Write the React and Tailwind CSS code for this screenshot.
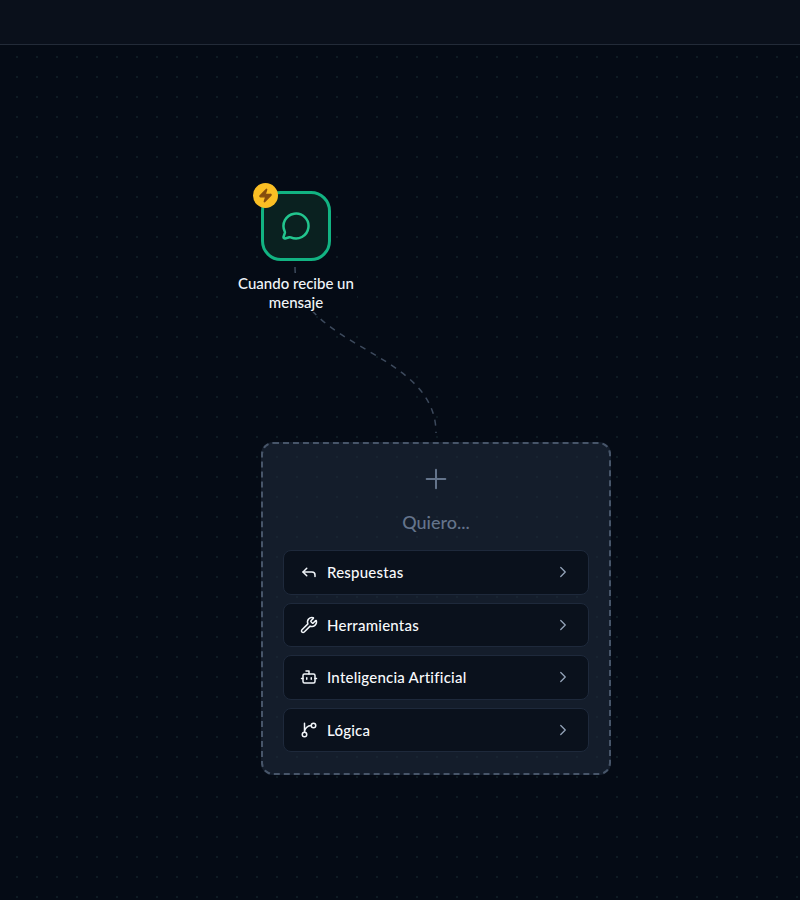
import React from "react";
import { Bot, ChevronRight, MessageCircle, Plus, Reply, Wrench, Zap } from "lucide-react";

const LogicIcon = ({ size, strokeWidth, className }) => (
  <svg
    width={size}
    height={size}
    viewBox="0 0 24 24"
    fill="none"
    stroke="currentColor"
    strokeWidth={strokeWidth}
    strokeLinecap="round"
    strokeLinejoin="round"
    className={className}
  >
    <path d="M15 6a9 9 0 0 0-9 9V3" />
    <circle cx="18" cy="6" r="3" />
    <circle cx="6" cy="18" r="3" />
  </svg>
);

const options = [
  { label: "Respuestas", icon: Reply },
  { label: "Herramientas", icon: Wrench },
  { label: "Inteligencia Artificial", icon: Bot },
  { label: "Lógica", icon: LogicIcon },
];

const App = () => {
  return (
    <div className="h-[900px] w-[800px] flex flex-col overflow-hidden bg-[#050b15] font-['Lato',sans-serif]">
      <header className="h-[45px] shrink-0 border-b border-[#232b38] bg-[#0a101b]" />

      {/* canvas */}
      <main className="relative flex-1 bg-[radial-gradient(circle,#0f1c24_1px,transparent_1px)] bg-[size:20px_20px] bg-[position:7px_2px]">
        <svg className="absolute left-0 top-0" width="800" height="855" fill="none">
          <path
            d="M295 222 C295 304 436 304 436 388"
            stroke="#475569"
            strokeOpacity="0.85"
            strokeWidth="1.5"
            strokeDasharray="6 6"
          />
        </svg>

        {/* trigger node */}
        <div className="absolute left-[231px] top-[146px] w-[130px] flex flex-col items-center">
          <div className="relative h-[70px] w-[70px] flex items-center justify-center rounded-[20px] border-[3px] border-[#12b382] bg-[#0a2120]">
            <MessageCircle size={30} strokeWidth={2} className="text-[#22c58e]" />
            <div className="absolute -left-[11px] -top-[11px] h-[25px] w-[25px] flex items-center justify-center rounded-full bg-[#fbbf24]">
              <Zap size={15} strokeWidth={2} className="fill-[#854d0e] text-[#854d0e]" />
            </div>
          </div>
          <p className="mt-[13px] w-[122px] bg-[#050b15] text-center text-[15px] leading-[19px] font-medium text-[#f1f5f9]">
            Cuando recibe un mensaje
          </p>
        </div>

        {/* add step panel */}
        <div className="absolute left-[261px] top-[397px] w-[350px] h-[333px] rounded-xl border-2 border-dashed border-[#475569] bg-[#1e293b]/60 px-[20px] pt-[19px]">
          <div className="flex flex-col items-center">
            <Plus size={32} strokeWidth={1.5} className="text-[#64748b]" />
            <p className="mt-[13px] text-lg leading-7 font-medium text-[#64748b]">Quiero...</p>
          </div>
          <div className="mt-[14px] flex flex-col gap-2">
            {options.map((opt) => {
              const Icon = opt.icon;
              return (
                <div
                  key={opt.label}
                  className="h-[44.5px] flex items-center justify-between rounded-lg border border-[#1e293b] bg-[#0a111c] px-4"
                >
                  <div className="flex items-center gap-[9px]">
                    <Icon size={18} strokeWidth={2} className="text-[#f1f5f9]" />
                    <span className="text-[15px] tracking-[0.015em] font-medium text-[#f8fafc]">{opt.label}</span>
                  </div>
                  <ChevronRight size={18} strokeWidth={1.75} className="text-[#94a3b8]" />
                </div>
              );
            })}
          </div>
        </div>
      </main>
    </div>
  );
};

export default App;
